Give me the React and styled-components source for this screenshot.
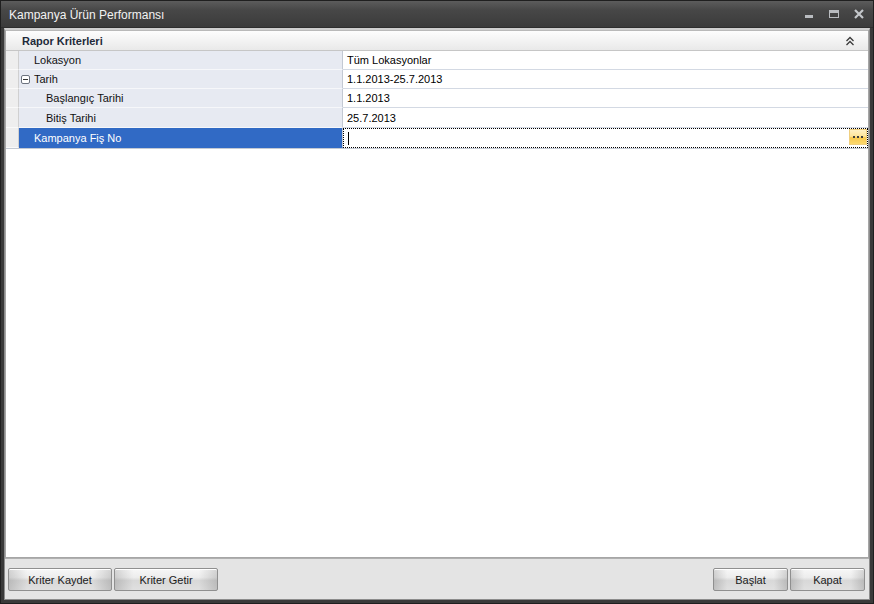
import React from 'react';
import styled, { createGlobalStyle } from 'styled-components';

const GlobalStyle = createGlobalStyle`
  html, body {
    margin: 0;
    padding: 0;
    background: #2b2b2b;
  }
  * {
    box-sizing: border-box;
  }
`;

const rows = [
  { label: 'Lokasyon', value: 'Tüm Lokasyonlar', level: 0 },
  { label: 'Tarih', value: '1.1.2013-25.7.2013', level: 0, group: true },
  { label: 'Başlangıç Tarihi', value: '1.1.2013', level: 1 },
  { label: 'Bitiş Tarihi', value: '25.7.2013', level: 1, tall: true },
  { label: 'Kampanya Fiş No', value: '', level: 0, tall: true, selected: true },
];

function App() {
  return (
    <>
      <GlobalStyle />
      <Window>
        <TitleBar>
          <Title>Kampanya Ürün Performansı</Title>
          <Controls>
            <CtrlButton>
              <svg width="10" height="10" viewBox="0 0 10 10">
                <rect x="1" y="6" width="8" height="3" fill="#b9bcc0" />
              </svg>
            </CtrlButton>
            <CtrlButton>
              <svg width="10" height="10" viewBox="0 0 10 10">
                <rect x="0.5" y="1.5" width="9" height="7" fill="none" stroke="#b9bcc0" />
                <rect x="1" y="2" width="8" height="2" fill="#b9bcc0" />
              </svg>
            </CtrlButton>
            <CtrlButton>
              <svg width="10" height="10" viewBox="0 0 10 10">
                <path d="M1 1 L9 9 M9 1 L1 9" stroke="#c4c7cb" strokeWidth="2.2" />
              </svg>
            </CtrlButton>
          </Controls>
        </TitleBar>
        <Body>
          <Panel>
            <PanelHeader>
              <PanelTitle>Rapor Kriterleri</PanelTitle>
              <svg width="10" height="10" viewBox="0 0 10 10">
                <path d="M1.5 5 L5 1.5 L8.5 5 M1.5 9 L5 5.5 L8.5 9" fill="none" stroke="#3a3a3a" strokeWidth="1.3" />
              </svg>
            </PanelHeader>
            <Grid>
              {rows.map((r) => (
                <Row key={r.label} $tall={r.tall}>
                  <Indicator />
                  <LabelCell $level={r.level} $selected={r.selected}>
                    {r.group && (
                      <Toggle>
                        <svg width="9" height="9" viewBox="0 0 9 9">
                          <rect x="0.5" y="0.5" width="8" height="8" rx="1.5" fill="#fff" stroke="#6d7480" />
                          <path d="M2 4.5 H7" stroke="#333" />
                        </svg>
                      </Toggle>
                    )}
                    {r.label}
                  </LabelCell>
                  {r.selected ? (
                    <EditCell>
                      <Caret />
                      <EllipsisButton>
                        <Dot />
                        <Dot />
                        <Dot />
                      </EllipsisButton>
                    </EditCell>
                  ) : (
                    <ValueCell>{r.value}</ValueCell>
                  )}
                </Row>
              ))}
            </Grid>
          </Panel>
          <Footer>
            <ButtonGroup>
              <Button $w={104}>Kriter Kaydet</Button>
              <Button $w={104}>Kriter Getir</Button>
            </ButtonGroup>
            <ButtonGroup>
              <Button $w={75}>Başlat</Button>
              <Button $w={75}>Kapat</Button>
            </ButtonGroup>
          </Footer>
        </Body>
      </Window>
    </>
  );
}

export default App;

const Window = styled.div`
  width: 874px;
  height: 604px;
  display: flex;
  flex-direction: column;
  background: #3a3a3a;
  border: 1px solid #1f1f1f;
  font-family: 'Liberation Sans', Arial, sans-serif;
  font-size: 11px;
  color: #000;
`;

const TitleBar = styled.div`
  height: 27px;
  flex: none;
  display: flex;
  align-items: center;
  justify-content: space-between;
  padding: 0 5px 0 8px;
  background: linear-gradient(to bottom, #5c5c5c 0%, #474747 35%, #3b3b3b 100%);
  border-bottom: 1px solid #2e2e2e;
`;

const Title = styled.div`
  color: #f2f2f2;
  font-size: 12px;
  padding-top: 2px;
`;

const Controls = styled.div`
  display: flex;
  align-items: center;
  gap: 15px;
  padding-right: 4px;
`;

const CtrlButton = styled.div`
  width: 10px;
  height: 10px;
  display: flex;
`;

const Body = styled.div`
  flex: 1;
  display: flex;
  flex-direction: column;
  margin: 0 3px 3px 3px;
  background: #e4e4e4;
  border: 1px solid #8c8c8c;
  border-top: 2px solid #cfcfcf;
`;

const Panel = styled.div`
  flex: 1;
  background: #fff;
  border: 1px solid #a6a6a6;
  border-top: none;
  margin: 0;
  display: flex;
  flex-direction: column;
`;

const PanelHeader = styled.div`
  height: 21px;
  flex: none;
  display: flex;
  align-items: center;
  justify-content: space-between;
  padding: 0 13px 0 16px;
  background: linear-gradient(to bottom, #fdfdfd 0%, #f3f3f3 50%, #e9e9e9 100%);
  border-top: 1px solid #b9b9b9;
  border-bottom: 1px solid #c6c6c6;
`;

const PanelTitle = styled.div`
  font-weight: bold;
  color: #1e2a3a;
`;

const Grid = styled.div`
  display: flex;
  flex-direction: column;
  border-bottom: 1px solid #c3c9d3;
`;

const Row = styled.div`
  display: grid;
  grid-template-columns: 13px 324px 1fr;
  height: ${(p) => (p.$tall ? '20px' : '19px')};
`;

const Indicator = styled.div`
  background: #eeeeee;
  border-right: 1px solid #d0d0d0;
  border-bottom: 1px solid #f9f9f9;
`;

const LabelCell = styled.div`
  display: flex;
  align-items: center;
  padding-left: ${(p) => (p.$level ? 27 : 15)}px;
  position: relative;
  background: ${(p) => (p.$selected ? '#316ac5' : '#e7eaf2')};
  color: ${(p) => (p.$selected ? '#fff' : '#111')};
  border-bottom: 1px solid ${(p) => (p.$selected ? '#316ac5' : '#f6f7fa')};
  border-right: 1px solid #c3c9d3;
  white-space: nowrap;
`;

const Toggle = styled.span`
  position: absolute;
  left: 2px;
  top: 5px;
  display: flex;
`;

const ValueCell = styled.div`
  display: flex;
  align-items: center;
  padding-left: 4px;
  border-bottom: 1px solid #d3d9e3;
  white-space: nowrap;
`;

const EditCell = styled.div`
  position: relative;
  display: flex;
  align-items: center;
  padding-left: 4px;
  border: 1px dotted #000;
`;

const Caret = styled.div`
  width: 1px;
  height: 13px;
  background: #000;
`;

const EllipsisButton = styled.div`
  position: absolute;
  right: 0;
  top: 0;
  width: 18px;
  height: 16px;
  display: flex;
  align-items: center;
  justify-content: center;
  gap: 2px;
  background: linear-gradient(to bottom, #fff0c4 0%, #fde49a 45%, #f8c84c 55%, #fbd86e 100%);
  border: 1px solid #f0cf80;
`;

const Dot = styled.span`
  width: 2px;
  height: 2px;
  background: #3d3d3d;
`;

const Footer = styled.div`
  height: 41px;
  flex: none;
  display: flex;
  align-items: center;
  justify-content: space-between;
  padding: 1px 4px 0 3px;
  background: #e4e4e4;
  border-top: 1px solid #b0b0b0;
`;

const ButtonGroup = styled.div`
  display: flex;
  gap: 2px;
`;

const Button = styled.button`
  width: ${(p) => p.$w}px;
  height: 23px;
  padding: 0;
  font-family: 'Liberation Sans', Arial, sans-serif;
  font-size: 11px;
  color: #1a1a1a;
  border: 1px solid #8f8f8f;
  border-radius: 2px;
  background:
    linear-gradient(to right, rgba(0, 0, 0, 0.14), rgba(0, 0, 0, 0) 18%, rgba(0, 0, 0, 0) 82%, rgba(0, 0, 0, 0.14)),
    linear-gradient(to bottom, #f7f7f7 0%, #ededed 40%, #d8d8d8 55%, #e0e0e0 100%);
  box-shadow: inset 0 1px 0 #ffffff;
`;
